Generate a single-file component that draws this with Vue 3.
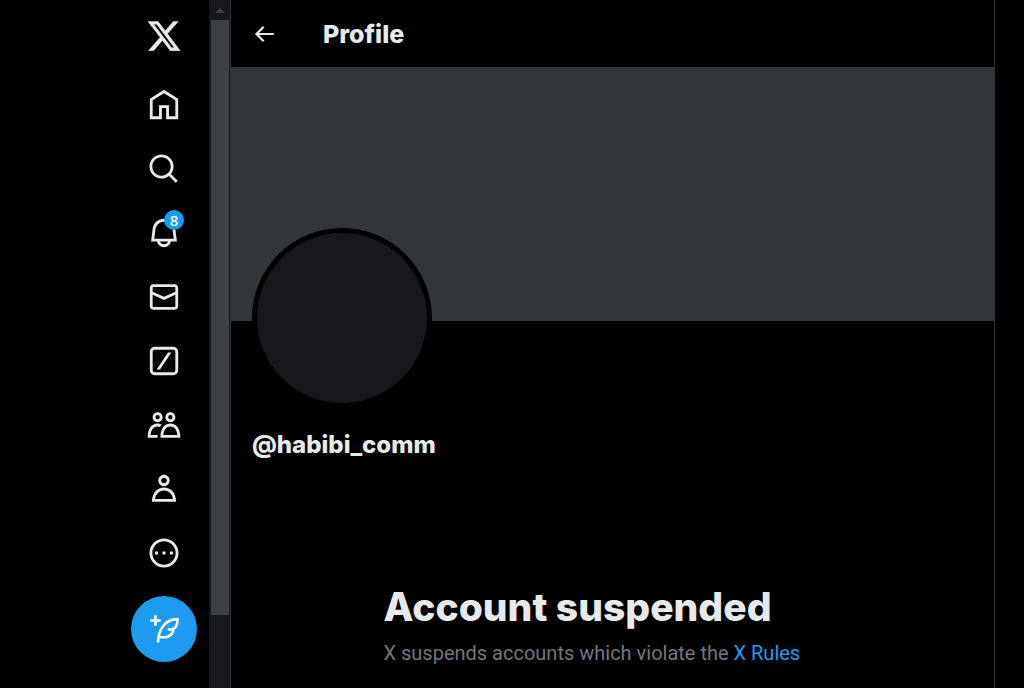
<script setup>
const items = [
  {
    label: 'Home',
    path: 'M12 1.3l10 6.200V22h-8.500v-7.800h-3V22H2V7.500L12 1.300zM4 8.600V20h4.500v-7.800h7V20H20V8.600l-8-4.950L4 8.600z',
  },
  {
    label: 'Explore',
    path: 'M10.25 3.75c-3.59 0-6.5 2.91-6.5 6.5s2.91 6.5 6.5 6.5c1.795 0 3.419-.726 4.596-1.904 1.178-1.177 1.904-2.801 1.904-4.596 0-3.59-2.91-6.5-6.5-6.5zm-8.500 6.500c0-4.694 3.806-8.500 8.500-8.500s8.500 3.806 8.500 8.500c0 1.986-.682 3.815-1.824 5.262l4.781 4.781-1.414 1.414-4.781-4.781c-1.447 1.142-3.276 1.824-5.262 1.824-4.694 0-8.500-3.806-8.500-8.500z',
  },
  {
    label: 'Notifications',
    badge: 8,
    path: 'M19.993 9.042C19.48 5.017 16.054 2 11.996 2s-7.49 3.021-7.999 7.051L2.866 18H7.1c.463 2.282 2.481 4 4.9 4s4.437-1.718 4.9-4h4.236l-1.143-8.958zM12 20c-1.306 0-2.417-.835-2.829-2h5.658c-.412 1.165-1.523 2-2.829 2zm-6.866-4l.847-6.698C6.364 6.272 8.941 4 11.996 4s5.627 2.268 6.013 5.295L18.864 16H5.134z',
  },
  {
    label: 'Messages',
    path: 'M1.998 5.5c0-1.381 1.119-2.5 2.5-2.5h15c1.381 0 2.5 1.119 2.5 2.5v13c0 1.381-1.119 2.5-2.5 2.5h-15c-1.381 0-2.5-1.119-2.5-2.5v-13zm2.5-.5c-.276 0-.5.224-.5.5v2.764l8 3.638 8-3.636V5.5c0-.276-.224-.5-.5-.5h-15zm15.5 5.463l-8 3.636-8-3.638V18.5c0 .276.224.5.5.5h15c.276 0 .5-.224.5-.5v-8.037z',
  },
  {
    label: 'Grok',
    path: 'M5.500 2h13C20.430 2 22 3.570 22 5.500v13c0 1.930-1.570 3.500-3.500 3.500h-13C3.570 22 2 20.430 2 18.500v-13C2 3.570 3.570 2 5.500 2zm0 2C4.670 4 4 4.670 4 5.500v13c0 .830.670 1.500 1.500 1.500h13c.830 0 1.500-.670 1.500-1.500v-13c0-.830-.670-1.500-1.500-1.500h-13zM6.800 18L14.800 6h2.400L9.200 18H6.800z',
  },
  {
    label: 'Communities',
    path: 'M7.501 19.917L7.471 21H.472l.029-1.027c.184-6.618 3.736-8.977 7-8.977.963 0 1.95.212 2.87.672-.444.478-.851 1.03-1.212 1.656-.507-.204-1.054-.329-1.658-.329-2.767 0-4.57 2.223-4.938 6.004H7.56c-.023.302-.05.599-.059.918zm15.998.056L23.528 21H9.472l.029-1.027c.184-6.618 3.736-8.977 7-8.977s6.816 2.358 7 8.977zM21.437 19c-.367-3.781-2.17-6.004-4.938-6.004s-4.57 2.223-4.938 6.004h9.875zm-4.938-9c-.799 0-1.527-.279-2.116-.73-.836-.64-1.384-1.638-1.384-2.77 0-1.93 1.567-3.5 3.5-3.5s3.5 1.57 3.5 3.5c0 1.132-.548 2.13-1.384 2.77-.589.451-1.317.73-2.116.73zm-1.5-3.5c0 .827.673 1.5 1.5 1.5s1.5-.673 1.5-1.5-.673-1.5-1.5-1.5-1.5.673-1.5 1.5zM7.501 3C9.434 3 11 4.57 11 6.5S9.433 10 7.501 10 4 8.43 4 6.5 5.568 3 7.501 3zm0 2C6.673 5 6 5.673 6 6.5S6.673 8 7.501 8 9 7.327 9 6.5 8.328 5 7.501 5z',
  },
  {
    label: 'Profile',
    path: 'M5.651 19h12.698c-.337-1.8-1.023-3.21-1.945-4.19C15.318 13.65 13.838 13 12 13s-3.317.65-4.404 1.81c-.922.98-1.608 2.39-1.945 4.19zm.486-5.56C7.627 11.85 9.648 11 12 11s4.373.85 5.863 2.44c1.477 1.58 2.366 3.8 2.632 6.46l.11 1.1H3.395l.11-1.1c.266-2.66 1.155-4.88 2.632-6.46zM12 4c-1.105 0-2 .9-2 2s.895 2 2 2 2-.9 2-2-.895-2-2-2zM8 6c0-2.21 1.791-4 4-4s4 1.79 4 4-1.791 4-4 4-4-1.790-4-4z',
  },
  {
    label: 'More',
    path: 'M12 3.750c-4.560 0-8.250 3.690-8.250 8.250s3.690 8.250 8.250 8.250 8.250-3.690 8.250-8.250S16.560 3.750 12 3.750zM1.750 12C1.750 6.340 6.340 1.750 12 1.750S22.250 6.340 22.250 12 17.660 22.250 12 22.250 1.750 17.660 1.750 12zm5 1.250a1.250 1.250 0 1 0 0-2.500 1.250 1.250 0 0 0 0 2.500zm5.250 0a1.250 1.250 0 1 0 0-2.500 1.250 1.250 0 0 0 0 2.500zm5.250 0a1.250 1.250 0 1 0 0-2.500 1.250 1.250 0 0 0 0 2.500z',
  },
]
</script>

<template>
  <div class="page">
    <aside class="sidebar">
      <a class="logo" href="#" aria-label="X">
        <svg viewBox="0 0 24 24"><path d="M18.244 2.25h3.308l-7.227 8.26 8.502 11.24H16.17l-5.214-6.817L4.990 21.750H1.680l7.730-8.835L1.254 2.250H8.080l4.713 6.231zm-1.161 17.520h1.833L7.084 4.126H5.117z" /></svg>
      </a>
      <nav class="nav" aria-label="Primary">
        <a v-for="item in items" :key="item.label" class="nav-item" href="#" :aria-label="item.label">
          <svg viewBox="0 0 24 24"><path :d="item.path" /></svg>
          <span v-if="item.badge" class="badge">{{ item.badge }}</span>
        </a>
      </nav>
      <button class="compose" type="button" aria-label="Post">
        <svg viewBox="0 0 24 24"><path d="M23 3c-6.62-.1-10.38 2.421-13.05 6.03C7.29 12.61 6 17.331 6 22h2c0-1.007.07-2.012.19-3H12c4.1 0 7.48-3.1 7.94-7.054C22.79 10.147 23.17 6.359 23 3zm-7 8h-1.500v2H16c.63-.016 1.2-.08 1.72-.188C16.950 15.240 14.680 17 12 17H8.550c.57-2.512 1.570-4.851 3-6.780 2.160-2.912 5.290-4.911 9.450-5.187C20.950 8.079 19.900 11 16 11zM4 9V6H1V4h3V1h2v3h3v2H6v3H4z" /></svg>
      </button>
    </aside>
    <div class="track" aria-hidden="true">
      <span class="track-arrow"></span>
      <span class="thumb"></span>
    </div>
    <main class="column">
      <header class="topbar">
        <button class="back" type="button" aria-label="Back">
          <svg viewBox="0 0 24 24"><path d="M7.414 13l5.043 5.040-1.414 1.420L3.586 12l7.457-7.460 1.414 1.420L7.414 11H21v2H7.414z" /></svg>
        </button>
        <h1>Profile</h1>
      </header>
      <div class="banner"></div>
      <section class="identity">
        <div class="avatar"></div>
        <h2>@habibi_comm</h2>
      </section>
      <section class="notice">
        <h3>Account suspended</h3>
        <p>X suspends accounts which violate the <a href="#">X Rules</a></p>
      </section>
    </main>
  </div>
</template>

<style>
body {
  margin: 0;
  background: #000;
}
</style>

<style scoped>
.page {
  display: flex;
  min-height: 100vh;
  box-sizing: border-box;
  padding-right: 29px;
  background: #000;
  color: #e7e9ea;
  font-family: Inter, "Liberation Sans", sans-serif;
}
h1, h2, h3, p {
  margin: 0;
}
svg {
  display: block;
  fill: currentColor;
}
a {
  color: inherit;
  text-decoration: none;
}
button {
  border: 0;
  padding: 0;
  background: none;
  color: inherit;
  cursor: pointer;
}
.sidebar {
  flex: 0 0 209px;
  display: flex;
  flex-direction: column;
  align-items: flex-end;
  box-sizing: border-box;
  padding: 3px 12px 0 0;
}
.logo,
.nav-item {
  position: relative;
  display: grid;
  place-items: center;
  width: 66px;
  height: 64px;
}
.logo {
  height: 65px;
}
.logo svg {
  width: 36px;
  height: 36px;
  stroke: currentColor;
  stroke-width: 0.3;
}
.nav {
  padding-top: 5px;
}
.nav-item svg {
  width: 34px;
  height: 34px;
}
.badge {
  position: absolute;
  top: 9px;
  left: 33px;
  display: grid;
  place-items: center;
  width: 20px;
  height: 20px;
  border-radius: 50%;
  background: #1d9bf0;
  color: #fff;
  font: 500 15px/20px "Noto Sans", sans-serif;
}
.compose {
  display: grid;
  place-items: center;
  width: 66px;
  height: 66px;
  margin-top: 11px;
  border-radius: 50%;
  background: #1d9bf0;
  color: #fff;
}
.compose svg {
  width: 31px;
  height: 31px;
}
.track {
  flex: 0 0 21px;
  display: flex;
  flex-direction: column;
  align-items: center;
  background: #16181c;
}
.track-arrow {
  margin: 8px 0 7px;
  border: 5px solid transparent;
  border-top: 0;
  border-bottom-color: #3e4144;
}
.thumb {
  width: 18px;
  height: 595px;
  background: #3e4144;
}
.column {
  flex: 1;
  min-width: 0;
  border: solid #2f3336;
  border-width: 0 1px;
}
.topbar {
  display: flex;
  align-items: center;
  gap: 46px;
  height: 67px;
  padding-left: 20px;
}
.back svg {
  width: 26px;
  height: 26px;
}
h1 {
  font-size: 25px;
  line-height: 32px;
  font-weight: 800;
}
.banner {
  aspect-ratio: 3 / 1;
  background: #333639;
}
.identity {
  padding-left: 21px;
}
.avatar {
  position: relative;
  box-sizing: border-box;
  width: 180px;
  height: 180px;
  margin-top: -93px;
  border: 5px solid #000;
  border-radius: 50%;
  background: #16181c;
}
h2 {
  margin-top: 20px;
  font-size: 24px;
  line-height: 34px;
  font-weight: 800;
}
.notice {
  max-width: 458px;
  margin: 120px auto 0;
}
h3 {
  font-size: 39px;
  line-height: 50px;
  font-weight: 800;
  white-space: nowrap;
}
p {
  margin-top: 8px;
  font-family: Roboto, "Liberation Sans", sans-serif;
  font-size: 20px;
  line-height: 26px;
  color: #71767b;
  white-space: nowrap;
}
p a {
  color: #1d9bf0;
}
</style>
